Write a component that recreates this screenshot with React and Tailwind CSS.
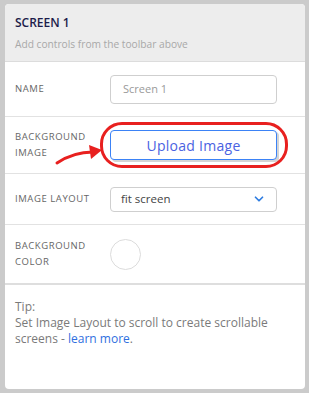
import React from 'react';
import { ChevronDown } from 'lucide-react';

const font = { fontFamily: '"Open Sans", "Liberation Sans", sans-serif' };

const Label = ({ children }) => (
  <div className="w-[95px] shrink-0 text-[9.5px] leading-[16px] tracking-[0.06em] text-[#666]">
    {children}
  </div>
);

const App = () => {
  return (
    <div className="min-h-[393px] w-[309px] bg-[#cbcbcb] pl-[5px] pr-[4px] pt-[4px]" style={font}>
      <div className="flex h-[385px] flex-col overflow-hidden rounded-[4px] bg-white">
        {/* Header */}
        <div className="h-[58px] shrink-0 border-b border-[#dcdcdc] bg-[#ededed] px-[10px] pt-[11px]">
          <div className="text-[12px] font-semibold leading-[16px] text-[#1c1c4a]">SCREEN 1</div>
          <div className="mt-[5px] text-[10.2px] leading-[16px] text-[#a8a8a8]">
            Add controls from the toolbar above
          </div>
        </div>

        {/* Name */}
        <div className="flex h-[55px] shrink-0 items-center border-b border-[#e2e2e2] px-[10px]">
          <Label>NAME</Label>
          <div className="flex h-[29px] w-[167px] items-center rounded-[4px] border border-[#cfcfcf] px-[12px] text-[11px] text-[#9a9a9a]">
            Screen 1
          </div>
        </div>

        {/* Background image */}
        <div className="relative flex h-[57px] shrink-0 items-center border-b border-[#e2e2e2] px-[10px]">
          <Label>
            BACKGROUND
            <br />
            IMAGE
          </Label>
          <div className="relative">
            <div className="flex h-[30px] w-[167px] items-center justify-center rounded-[4px] border border-[#3b82f6] bg-white text-[14px] tracking-[0.02em] text-[#4a62e2] shadow-[2px_2px_0_#d4d4d4]">
              Upload Image
            </div>
            <div className="absolute -left-[10px] -right-[11px] -top-[8px] -bottom-[8px] rounded-[22px] border-[3px] border-[#e8201f]" />
          </div>
          <svg className="absolute left-[48px] top-[27px]" width="52" height="22" viewBox="0 0 52 22">
            <path d="M4 19 C 16 11, 28 8, 40 8" fill="none" stroke="#e8201f" strokeWidth="3" strokeLinecap="round" />
            <path d="M36 1 L49 6 L38 15 Z" fill="#e8201f" />
          </svg>
        </div>

        {/* Image layout */}
        <div className="flex h-[51px] shrink-0 items-center border-b border-[#e2e2e2] px-[10px]">
          <Label>IMAGE LAYOUT</Label>
          <div className="flex h-[25px] w-[167px] items-center justify-between rounded-[4px] border border-[#cfcfcf] pl-[10px] pr-[10px] text-[11.5px] text-[#444]">
            <span>fit screen</span>
            <ChevronDown className="h-[14px] w-[14px] text-[#2f7de1]" strokeWidth={3} />
          </div>
        </div>

        {/* Background color */}
        <div className="flex h-[60px] shrink-0 items-center border-b-2 border-[#dedede] px-[10px]">
          <Label>
            BACKGROUND
            <br />
            COLOR
          </Label>
          <div className="h-[31px] w-[31px] rounded-full border border-[#dcdcdc]" />
        </div>

        {/* Tip */}
        <div className="px-[10px] pt-[14px] text-[12px] leading-[16px] text-[#7a7a7a]">
          <p>Tip:</p>
          <p>Set Image Layout to scroll to create scrollable</p>
          <p>
            screens - <span className="text-[#2f6fe0]">learn more</span>.
          </p>
        </div>
      </div>
    </div>
  );
};

export default App;
